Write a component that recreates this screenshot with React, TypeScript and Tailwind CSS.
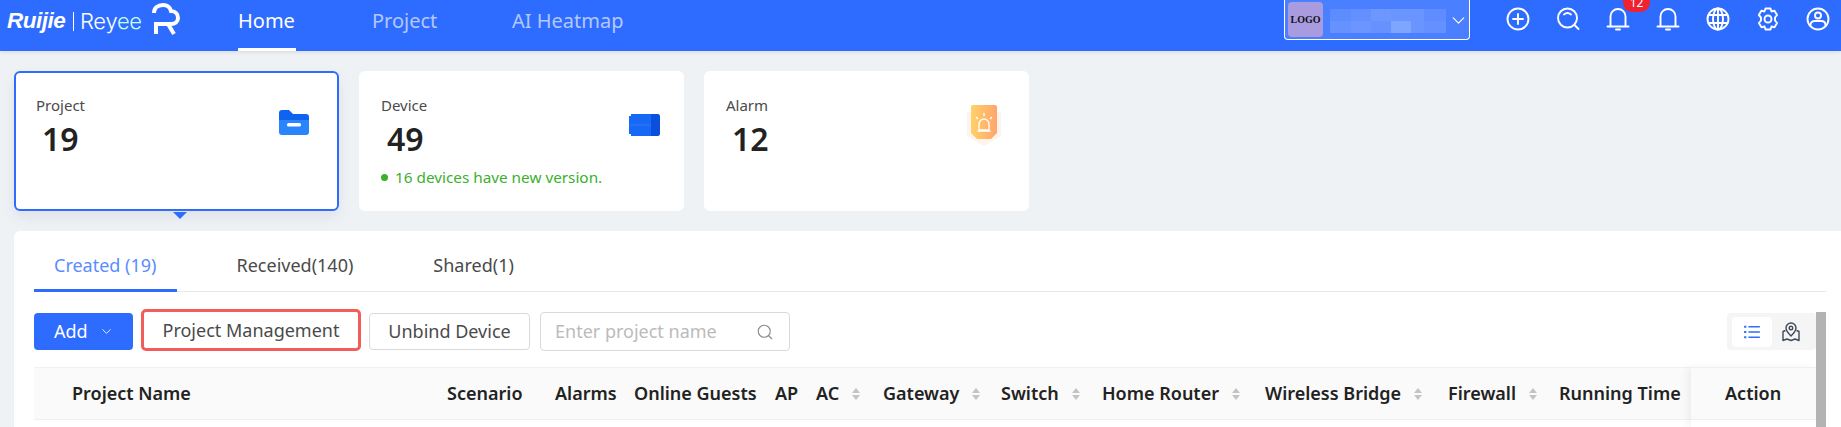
import { ChevronDown, Search } from 'lucide-react';

const NAV = [
  { label: 'Home', active: true, cls: 'w-[58px] mr-[76px]' },
  { label: 'Project', active: false, cls: 'w-[65px] mr-[75px]' },
  { label: 'AI Heatmap', active: false, cls: 'w-[114px]' },
];

const BLUR_ROWS = [
  ['w-[21px] bg-[#5d8cff]', 'w-[20px] bg-[#6490ff]', 'w-[20px] bg-[#6d97ff]', 'w-[20px] bg-[#6a95ff]', 'w-[13px] bg-[#6a94ff]', 'w-[22px] bg-[#5f8dff]'],
  ['w-[21px] bg-[#6592ff]', 'w-[20px] bg-[#6c96ff]', 'w-[20px] bg-[#6791ff]', 'w-[20px] bg-[#7ea5ff]', 'w-[13px] bg-[#6a94ff]', 'w-[22px] bg-[#6491ff]'],
];

const COLUMNS = [
  { label: 'Project Name', cls: 'w-[413px] pl-[38px]' },
  { label: 'Scenario', cls: 'w-[108px]' },
  { label: 'Alarms', cls: 'w-[79px]' },
  { label: 'Online Guests', cls: 'w-[141px]' },
  { label: 'AP', cls: 'w-[41px]' },
  { label: 'AC', cls: 'w-[67px]', sort: true },
  { label: 'Gateway', cls: 'w-[118px]', sort: true },
  { label: 'Switch', cls: 'w-[101px]', sort: true },
  { label: 'Home Router', cls: 'w-[163px]', sort: true },
  { label: 'Wireless Bridge', cls: 'w-[183px]', sort: true },
  { label: 'Firewall', cls: 'w-[111px]', sort: true },
  { label: 'Running Time', cls: 'w-[132px]' },
];

function Icon({ children, className = 'w-[26px] h-[26px]' }: { children: React.ReactNode; className?: string }) {
  return (
    <svg viewBox="0 0 26 26" fill="none" stroke="white" strokeWidth="1.9" strokeLinecap="round" strokeLinejoin="round" className={className}>
      {children}
    </svg>
  );
}

function Bell() {
  return (
    <Icon>
      <path d="M5.5 19.5V10.5a7.5 7.5 0 0 1 15 0v9" />
      <path d="M2.5 20.5h21" />
      <path d="M11 23.5h4" />
    </Icon>
  );
}

function SortMark() {
  return (
    <span className="flex flex-col gap-[2px] ml-[13px]">
      <span className="w-0 h-0 border-x-[4px] border-x-transparent border-b-[5px] border-b-[#c4c4c4]" />
      <span className="w-0 h-0 border-x-[4px] border-x-transparent border-t-[5px] border-t-[#c4c4c4]" />
    </span>
  );
}

function Card({ title, value, note, selected, children }: { title: string; value: string; note?: string; selected?: boolean; children: React.ReactNode }) {
  return (
    <div className={`relative w-[325px] h-[140px] rounded-[6px] bg-white ${selected ? 'border-2 border-[#2e6cff] shadow-[0_6px_14px_rgba(30,50,90,0.08)] pl-[20px] pt-[20px]' : 'pl-[22px] pt-[22px]'}`}>
      <div className="-mt-px text-[15px] leading-[26px] text-[#4a4a4a]">{title}</div>
      <div className="mt-px pl-[6px] text-[32px] leading-[40px] font-semibold text-[#222]">{value}</div>
      {note && (
        <div className="flex items-center mt-[8px] text-[15.3px] leading-[20px] text-[#3ab02e]">
          <span className="w-[7px] h-[7px] rounded-full bg-[#3ab02e] mr-[7px]" />
          {note}
        </div>
      )}
      {children}
      {selected && (
        <span className="absolute left-[157px] top-[139px] w-0 h-0 border-x-[7px] border-x-transparent border-t-[7px] border-t-[#2e6cff]" />
      )}
    </div>
  );
}

export default function App() {
  return (
    <div className="relative h-[427px] overflow-hidden bg-[#eff2f5] font-['Noto_Sans',sans-serif]">
      <header className="relative h-[51px] bg-[#2e6cff] shadow-[0_1px_4px_rgba(0,0,0,0.1)] flex text-white">
        <div className="w-[238px] flex items-start pl-[7px] shrink-0">
          <span className="mt-[9px] w-[59px] text-[22.5px] leading-[24px] font-bold italic font-['Liberation_Sans',sans-serif] tracking-[-0.5px]">Ruijie</span>
          <span className="mt-[12px] ml-[7px] w-px h-[19px] bg-white" />
          <span className="mt-[9px] ml-[6px] w-[62px] text-[22px] leading-[24px] font-['Inter',sans-serif] font-light tracking-[-0.3px]">
            Rey<span className="text-[#c8fff0]">ee</span>
          </span>
          <svg viewBox="0 0 28 32" fill="none" stroke="white" strokeWidth="4" className="w-[28px] h-[32px] mt-[3px] ml-[10px]">
            <path d="M2 10C2 5 6 2 11 2c4 0 7 2 8 6 4 0 7 3 7 7s-3 6-7 6H4v10" strokeLinecap="butt" />
            <path d="M16 21l6 10" />
          </svg>
        </div>

        <nav className="flex h-full text-[20px]">
          {NAV.map(item => (
            <div key={item.label} className={`relative whitespace-nowrap pt-[7px] leading-[27px] ${item.cls} ${item.active ? 'text-white' : 'text-[#b4c7ff]'}`}>
              {item.label}
              {item.active && <span className="absolute left-0 right-0 bottom-0 h-[3px] bg-white" />}
            </div>
          ))}
        </nav>

        <div className="ml-[658px] w-[186px] h-[40px] rounded-b-[4px] border border-t-0 border-white bg-[#4a7fff] flex items-start pl-[3px] pt-[2px] shrink-0">
          <div className="w-[35px] h-[35px] rounded-[4px] bg-[#a99be0] flex items-center justify-center text-[10px] font-bold text-[#111] font-['Liberation_Serif',serif]">LOGO</div>
          <div className="ml-[7px] mt-[7px] flex flex-col w-[116px]">
            {BLUR_ROWS.map((row, i) => (
              <div key={i} className="flex h-[12px]">
                {row.map((cls, j) => <span key={j} className={cls} />)}
              </div>
            ))}
          </div>
          <ChevronDown className="ml-[2px] mt-[8px] w-[21px] h-[21px]" strokeWidth={1.3} />
        </div>

        <div className="flex items-start gap-[24px] ml-[35px] pt-[6px]">
          <Icon>
            <circle cx="13" cy="13" r="10.5" />
            <path d="M13 8v10M8 13h10" />
          </Icon>
          <Icon>
            <circle cx="12.5" cy="12" r="9.5" />
            <path d="M9 8.5c2-1.6 5-1.6 7 0M19.5 19l4 4" />
          </Icon>
          <div className="relative">
            <Bell />
            <span className="absolute left-[18px] -top-[13px] w-[27px] h-[19px] rounded-[10px] bg-[#f0222f] text-[12px] leading-[19px] text-center">12</span>
          </div>
          <Bell />
          <Icon>
            <circle cx="13" cy="13" r="10.5" />
            <ellipse cx="13" cy="13" rx="5" ry="10.5" />
            <path d="M13 2.5v21M3.5 9h19M3.5 17h19" />
          </Icon>
          <Icon>
            <path d="M10.5 2.5h5l1 3 3-.8 2.6 4.3-2.1 2.500v3l2.100 2.500-2.600 4.300-3-.8-1 3h-5l-1-3-3 .8-2.600-4.300 2.100-2.500v-3L3.800 9l2.600-4.300 3 .8z" />
            <circle cx="13" cy="13" r="3.5" />
          </Icon>
          <Icon>
            <circle cx="13" cy="13" r="10.5" />
            <circle cx="13" cy="9.5" r="3" />
            <path d="M5.5 20v-1c0-2.500 2-4 4.500-4h6c2.500 0 4.500 1.500 4.500 4v1" />
          </Icon>
        </div>
      </header>

      <div className="flex gap-[20px] pl-[14px] pt-[20px]">
        <Card title="Project" value="19" selected>
          <svg viewBox="0 0 30 25" className="absolute left-[263px] top-[37px] w-[30px] h-[25px]">
            <path d="M0 3a3 3 0 0 1 3-3h7l4 4h13a3 3 0 0 1 3 3v3H0z" fill="#0f63ee" />
            <path d="M0 10h30v12a3 3 0 0 1-3 3H3a3 3 0 0 1-3-3z" fill="#2a84fb" />
            <rect x="8" y="13" width="14" height="3.500" rx="1.500" fill="white" />
          </svg>
        </Card>
        <Card title="Device" value="49" note="16 devices have new version.">
          <svg viewBox="0 0 31 22" className="absolute left-[270px] top-[43px] w-[31px] h-[22px]">
            <path d="M2 0h26a3 3 0 0 1 3 3v16a3 3 0 0 1-3 3H2v-2H0V2h2z" fill="#1769f5" />
            <path d="M22 0h6a3 3 0 0 1 3 3v16a3 3 0 0 1-3 3h-6z" fill="#0a50dc" />
            <rect x="0" y="10.500" width="22" height="1" fill="#2f7bf7" />
          </svg>
        </Card>
        <Card title="Alarm" value="12">
          <svg viewBox="0 0 34 41" className="absolute left-[263px] top-[34px] w-[34px] h-[41px]">
            <defs>
              <linearGradient id="alarmFill" x1="0" y1="0" x2="1" y2="0">
                <stop offset="0" stopColor="#ffd166" />
                <stop offset="1" stopColor="#ffa56e" />
              </linearGradient>
            </defs>
            <path d="M0 7h34v24L17 41 0 31z" fill="#fdf4ef" />
            <path d="M4 2a2 2 0 0 1 2-2h22a2 2 0 0 1 2 2v26l-6 6H10l-6-6z" fill="url(#alarmFill)" />
            <path d="M12 25v-6a5 5 0 0 1 10 0v6zM10.500 26h13M17 8v3M9 12l2 2M25 12l-2 2" stroke="#fff" strokeWidth="1.300" fill="none" />
          </svg>
        </Card>
      </div>

      <section className="relative mt-[20px] ml-[14px] h-[196px] rounded-tl-[6px] bg-white pl-[20px] pr-[25px]">
        <div className="flex h-[61px] gap-[40px] border-b border-[#e8e8e8] text-[18px] text-[#4a4a4a] -mr-[10px]">
          <div className="relative px-[20px] pt-[9px] flex items-center text-[#5b8cff] whitespace-nowrap">
            Created (19)
            <span className="absolute left-0 right-0 -bottom-px h-[3px] bg-[#2e6cff]" />
          </div>
          <div className="px-[20px] pt-[9px] flex items-center whitespace-nowrap">Received(140)</div>
          <div className="px-[20px] pt-[9px] flex items-center whitespace-nowrap">Shared(1)</div>
        </div>

        <div className="flex items-start h-[42px] mt-[17px] text-[18px]">
          <button className="mt-[4px] w-[99px] h-[37px] rounded-[4px] bg-[#2e6cff] text-white flex items-center pl-[20px]">
            Add
            <ChevronDown className="ml-[11px] w-[15px] h-[15px]" strokeWidth={1.4} />
          </button>
          <button className="ml-[8px] w-[220px] h-[42px] rounded-[5px] border-[3px] border-[#f25d59] text-[#4a4a4a] whitespace-nowrap">Project Management</button>
          <button className="ml-[8px] mt-[4px] w-[161px] h-[37px] rounded-[4px] border border-[#d9d9d9] text-[#4a4a4a] whitespace-nowrap">Unbind Device</button>
          <div className="ml-[10px] mt-[3px] w-[250px] h-[39px] rounded-[4px] border border-[#d9d9d9] flex items-center justify-between pl-[14px] pr-[15px] text-[#bbbbbb] whitespace-nowrap">
            Enter project name
            <Search className="w-[18px] h-[18px] text-[#8c8c8c]" strokeWidth={1.5} />
          </div>
          <div className="ml-auto mt-[4px] w-[89px] h-[37px] rounded-[4px] bg-[#f5f5f5] flex items-center pl-[5px]">
            <span className="w-[40px] h-[30px] rounded-[4px] bg-white flex items-center justify-center">
              <svg viewBox="0 0 18 16" fill="none" stroke="#2e6cff" strokeWidth="1.600" className="w-[16px] h-[14px]">
                <path d="M5 2h13M5 8h13M5 14h13" />
                <path d="M0 2h2.500M0 8h2.500M0 14h2.500" strokeWidth="2.200" />
              </svg>
            </span>
            <svg viewBox="0 0 20 20" fill="none" stroke="#3f4a5a" strokeWidth="1.400" strokeLinejoin="round" className="ml-[9px] w-[20px] h-[20px]">
              <path d="M10 14c-3-3-5-5-5-8a5 5 0 0 1 10 0c0 3-2 5-5 8z" />
              <circle cx="10" cy="6" r="1.800" />
              <path d="M4.500 8.500 2 9.500v9l4-1.500 4 1.500 4-1.500 4 1.500v-9l-2.500-1" />
            </svg>
          </div>
        </div>

        <div className="flex h-[53px] mt-[16px] bg-[#fafafa] border-y border-[#f0f0f0] text-[18px] font-semibold text-[#222] items-center whitespace-nowrap">
          {COLUMNS.map(col => (
            <div key={col.label} className={`flex items-center shrink-0 ${col.cls}`}>
              {col.label}
              {col.sort && <SortMark />}
            </div>
          ))}
        </div>

        <div className="absolute right-[25px] top-[136px] bottom-0 w-[125px] border-t border-[#f0f0f0] shadow-[-4px_0_8px_rgba(0,0,0,0.05)]">
          <div className="h-[52px] bg-[#fafafa] border-b border-[#f0f0f0] pl-[34px] flex items-center text-[18px] font-semibold text-[#222]">Action</div>
          <div className="h-full bg-white" />
        </div>

        <div className="absolute right-[15px] top-[81px] bottom-0 w-[10px] bg-[#b3b3b3]" />
      </section>
    </div>
  );
}
